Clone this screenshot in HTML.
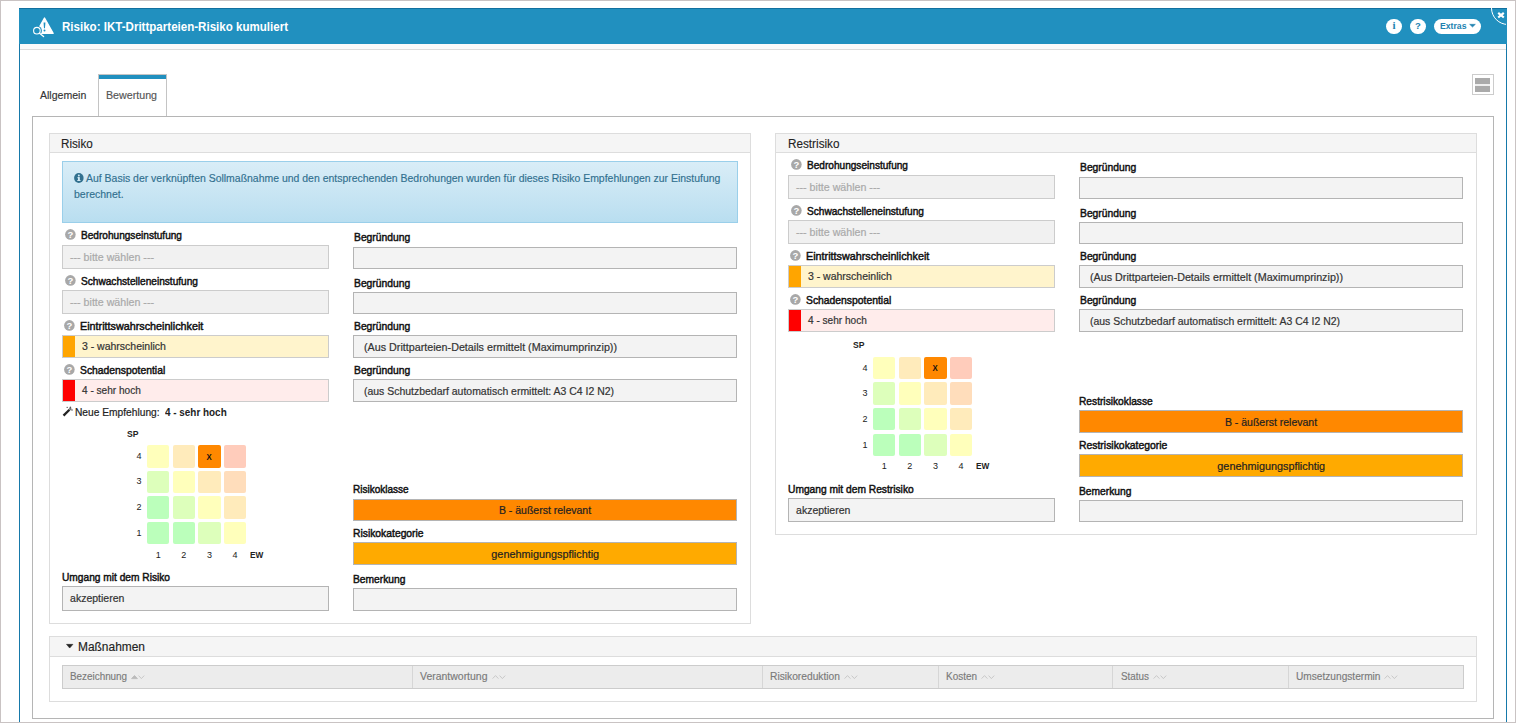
<!DOCTYPE html>
<html lang="de">
<head>
<meta charset="utf-8">
<title>Risiko: IKT-Drittparteien-Risiko kumuliert</title>
<style>
*{box-sizing:border-box;margin:0;padding:0}
html,body{width:1516px;height:723px;overflow:hidden;background:#fff}
body{position:relative;font-family:"Liberation Sans",sans-serif;font-size:11px;color:#333}
.b{position:absolute}
.t{position:absolute;white-space:nowrap;display:block}
.page-frame{border:1px solid #c9c3c3;border-bottom-width:1px}
.dlg{border:1px solid #1679aa;border-top:0;border-bottom:0;background:#fff}
.hdr{background:#2190bf;border-top:1px solid #12709f}
.subbar{background:#fafafa;border-bottom:1px solid #dcdcdc}
.tabbox{border:1px solid #b5b5b5;background:#fff}
.tab{border:1px solid #c4c4c4;border-bottom:0;background:#fff}
.tab i{position:absolute;left:0;right:0;top:0;height:4px;background:#2190bf}
.panel{border:1px solid #ddd;background:#fff}
.phead{background:#f5f5f5;border:1px solid #ddd}
.inp{border:1px solid #b4b4b4;background:#f3f3f3}
.sel{border:1px solid #ccc;background:#f1f1f1}
.alert{border:1px solid #9acfea;background:linear-gradient(#d9edf7,#b9def0)}
.cell{border-radius:2px}
.pill{background:#fff;border-radius:8px}
svg{position:absolute;overflow:visible}
.serif{font-family:"Liberation Serif",serif}

</style>
</head>
<body>
<div class="b dlg" style="left:19px;top:8px;width:1488px;height:714px;"></div>
<div class="b hdr" style="left:19px;top:8px;width:1488px;height:36px;"></div>
<div class="b subbar" style="left:20px;top:44px;width:1486px;height:6px;"></div>
<header>
<svg style="left:30px;top:14px" width="28" height="26" viewBox="0 0 28 26">
<path d="M14.5 4.1 L23.1 19.3 L6 19.3 Z" fill="#fff" stroke="#fff" stroke-width="1.4" stroke-linejoin="round"/>
<path d="M13.6 8.6 H15.4 L15 14.3 H14 Z" fill="#2190bf"/>
<circle cx="14.5" cy="16.6" r="1" fill="#2190bf"/>
<circle cx="6.9" cy="16.7" r="5" fill="#2190bf"/>
<circle cx="6.9" cy="16.7" r="3.3" fill="#2190bf" stroke="#fff" stroke-width="1.1"/>
<path d="M9.5 19.3 L13.6 22.6" stroke="#fff" stroke-width="1.3" stroke-linecap="round"/>
</svg>
<h1 class="t" style="left:61.80px;top:21.00px;font-size:12px;line-height:12px;font-weight:700;color:#fff;transform:scale(0.9629,1.0);transform-origin:0 10px;">Risiko: IKT-Drittparteien-Risiko kumuliert</h1>
<div class="b" style="left:1386px;top:19px;width:16px;height:15px;background:#fff;border-radius:8px"></div>
<span class="t serif" style="left:1392.47px;top:20.00px;font-size:11px;line-height:11px;font-weight:700;color:#2182b0;">i</span>
<div class="b" style="left:1410px;top:19px;width:16px;height:15px;background:#fff;border-radius:8px"></div>
<span class="t" style="left:1415.09px;top:21.00px;font-size:9.5px;line-height:9.5px;font-weight:700;color:#2182b0;">?</span>
<div class="b pill" style="left:1434px;top:19px;width:47px;height:15px;"></div>
<span class="t" style="left:1440.00px;top:21.00px;font-size:9.5px;line-height:9.5px;font-weight:700;color:#2182b0;transform:scale(0.9118,1.0);transform-origin:0 8px;">Extras</span>
<svg style="left:1468.5px;top:24px" width="7" height="4" viewBox="0 0 7 4"><path d="M.6 .3 H6.4 L3.5 3.1 Z" fill="#2182b0" stroke="#2182b0" stroke-width=".5" stroke-linejoin="round"/></svg>
<div class="b" style="left:1490px;top:8px;width:16px;height:18px;overflow:hidden"><div style="position:absolute;left:.6px;top:-17px;width:34px;height:34px;border:1.6px solid #fff;border-radius:50%"></div></div>
<svg style="left:1496.5px;top:11.7px" width="8" height="6.4" viewBox="0 0 8 6.4"><path d="M1.2 .9 L6.8 5.5 M6.8 .9 L1.2 5.5" stroke="#fff" stroke-width="2.2" stroke-linecap="butt"/></svg>
</header>
<nav>
<div class="b tab" style="left:98px;top:74px;width:69px;height:43px;"><i></i></div>
<div class="b tabbox" style="left:32px;top:116px;width:1462px;height:603px;"></div>
<span class="t" style="left:39.80px;top:90.00px;font-size:10.5px;line-height:10.5px;font-weight:400;-webkit-text-stroke:0.15px #333;transform:scale(1.0041,1.0);transform-origin:0 9px;">Allgemein</span>
<span class="t" style="left:106.30px;top:90.00px;font-size:10.5px;line-height:10.5px;font-weight:400;color:#555;-webkit-text-stroke:0.15px #555;transform:scale(1.0159,1.0);transform-origin:0 9px;">Bewertung</span>
<div class="b" style="left:1472px;top:74px;width:22px;height:21px;border:1px solid #ccc;background:#fff"></div>
<div class="b" style="left:1475px;top:78px;width:15px;height:14px;background:#eee"></div>
<div class="b" style="left:1475px;top:78px;width:15px;height:6px;background:#aaa"></div>
<div class="b" style="left:1475px;top:86px;width:15px;height:6px;background:#aaa"></div>
</nav>
<main>
<section>
<div class="b panel" style="left:49px;top:133px;width:702px;height:491px;"></div>
<div class="b phead" style="left:49px;top:133px;width:702px;height:20px;"></div>
<h2 class="t" style="left:61.20px;top:138.00px;font-size:12px;line-height:12px;font-weight:400;color:#222;-webkit-text-stroke:0.1px #222;transform:scale(0.9733,1.0);transform-origin:0 10px;">Risiko</h2>
<div class="b alert" style="left:62px;top:161px;width:676px;height:62px;"></div>
<svg style="left:74.4px;top:172.9px" width="9.7" height="10" viewBox="0 0 10 10" preserveAspectRatio="none"><circle cx="5" cy="5" r="4.9" fill="#31708f"/><rect x="4.1" y="4.2" width="1.9" height="3.6" fill="#d4eaf5"/><rect x="3.5" y="4.2" width="2" height="1" fill="#d4eaf5"/><rect x="3.4" y="7" width="3.3" height="1" fill="#d4eaf5"/><circle cx="5" cy="2.5" r="1" fill="#d4eaf5"/></svg>
<p class="t" style="left:86.40px;top:173.00px;font-size:10.5px;line-height:10.5px;font-weight:400;color:#31708f;-webkit-text-stroke:0.15px #31708f;transform:scale(0.9962,1.0);transform-origin:0 9px;">Auf Basis der verknüpften Sollmaßnahme und den entsprechenden Bedrohungen wurden für dieses Risiko Empfehlungen zur Einstufung</p>
<p class="t" style="left:74.00px;top:189.00px;font-size:10.5px;line-height:10.5px;font-weight:400;color:#31708f;-webkit-text-stroke:0.15px #31708f;">berechnet.</p>
<svg style="left:64.5px;top:229px" width="10.8" height="10.8" viewBox="0 0 10 10"><circle cx="5" cy="5" r="4.9" fill="#a8a8a8"/><text x="5" y="8.1" font-size="8.8" font-weight="700" text-anchor="middle" fill="#fff" font-family="Liberation Sans, sans-serif">?</text></svg>
<label class="t" style="left:80.50px;top:230.00px;font-size:10.5px;line-height:10.5px;font-weight:400;color:#111;-webkit-text-stroke:0.45px #111;transform:scale(0.9610,1.0);transform-origin:0 9px;">Bedrohungseinstufung</label>
<div class="b sel" style="left:62px;top:245px;width:267px;height:24px;"></div>
<span class="t" style="left:69.80px;top:252.00px;font-size:10.5px;line-height:10.5px;font-weight:400;color:#aaa;-webkit-text-stroke:0.2px #aaa;transform:scale(1.0138,1.0);transform-origin:0 9px;">--- bitte wählen ---</span>
<label class="t" style="left:353.50px;top:232.00px;font-size:10.5px;line-height:10.5px;font-weight:400;color:#111;-webkit-text-stroke:0.45px #111;transform:scale(0.9822,1.0);transform-origin:0 9px;">Begründung</label>
<div class="b inp" style="left:353px;top:247px;width:384px;height:22px;"></div>
<svg style="left:64.5px;top:275px" width="10.8" height="10.8" viewBox="0 0 10 10"><circle cx="5" cy="5" r="4.9" fill="#a8a8a8"/><text x="5" y="8.1" font-size="8.8" font-weight="700" text-anchor="middle" fill="#fff" font-family="Liberation Sans, sans-serif">?</text></svg>
<label class="t" style="left:80.50px;top:276.00px;font-size:10.5px;line-height:10.5px;font-weight:400;color:#111;-webkit-text-stroke:0.45px #111;transform:scale(0.9636,1.0);transform-origin:0 9px;">Schwachstelleneinstufung</label>
<div class="b sel" style="left:62px;top:290px;width:267px;height:24px;"></div>
<span class="t" style="left:69.80px;top:297.00px;font-size:10.5px;line-height:10.5px;font-weight:400;color:#aaa;-webkit-text-stroke:0.2px #aaa;transform:scale(1.0138,1.0);transform-origin:0 9px;">--- bitte wählen ---</span>
<label class="t" style="left:353.50px;top:278.00px;font-size:10.5px;line-height:10.5px;font-weight:400;color:#111;-webkit-text-stroke:0.45px #111;transform:scale(0.9822,1.0);transform-origin:0 9px;">Begründung</label>
<div class="b inp" style="left:353px;top:292px;width:384px;height:22px;"></div>
<svg style="left:64.2px;top:320px" width="10.8" height="10.8" viewBox="0 0 10 10"><circle cx="5" cy="5" r="4.9" fill="#a8a8a8"/><text x="5" y="8.1" font-size="8.8" font-weight="700" text-anchor="middle" fill="#fff" font-family="Liberation Sans, sans-serif">?</text></svg>
<label class="t" style="left:80.20px;top:321.00px;font-size:10.5px;line-height:10.5px;font-weight:400;color:#111;-webkit-text-stroke:0.45px #111;transform:scale(1.0256,1.0);transform-origin:0 9px;">Eintrittswahrscheinlichkeit</label>
<div class="b sel" style="left:62px;top:335px;width:267px;height:23px;background:#fff4cc;"></div>
<div class="b" style="left:63px;top:336px;width:12px;height:21px;background:#ffa500"></div>
<span class="t" style="left:81.90px;top:341.00px;font-size:10.5px;line-height:10.5px;font-weight:400;-webkit-text-stroke:0.2px #333;">3 - wahrscheinlich</span>
<label class="t" style="left:353.50px;top:321.00px;font-size:10.5px;line-height:10.5px;font-weight:400;color:#111;-webkit-text-stroke:0.45px #111;transform:scale(0.9822,1.0);transform-origin:0 9px;">Begründung</label>
<div class="b inp" style="left:353px;top:335px;width:384px;height:23px;"></div>
<span class="t" style="left:363.80px;top:342.00px;font-size:10.5px;line-height:10.5px;font-weight:400;-webkit-text-stroke:0.2px #333;transform:scale(1.0227,1.0);transform-origin:0 9px;">(Aus Drittparteien-Details ermittelt (Maximumprinzip))</span>
<svg style="left:64.2px;top:364px" width="10.8" height="10.8" viewBox="0 0 10 10"><circle cx="5" cy="5" r="4.9" fill="#a8a8a8"/><text x="5" y="8.1" font-size="8.8" font-weight="700" text-anchor="middle" fill="#fff" font-family="Liberation Sans, sans-serif">?</text></svg>
<label class="t" style="left:80.20px;top:365.00px;font-size:10.5px;line-height:10.5px;font-weight:400;color:#111;-webkit-text-stroke:0.45px #111;transform:scale(0.9860,1.0);transform-origin:0 9px;">Schadenspotential</label>
<div class="b sel" style="left:62px;top:379px;width:267px;height:23px;background:#ffeceb;"></div>
<div class="b" style="left:63px;top:380px;width:12px;height:21px;background:#ff0000"></div>
<span class="t" style="left:81.90px;top:385.00px;font-size:10.5px;line-height:10.5px;font-weight:400;-webkit-text-stroke:0.2px #333;transform:scale(0.9593,1.0);transform-origin:0 9px;">4 - sehr hoch</span>
<label class="t" style="left:353.50px;top:365.00px;font-size:10.5px;line-height:10.5px;font-weight:400;color:#111;-webkit-text-stroke:0.45px #111;transform:scale(0.9822,1.0);transform-origin:0 9px;">Begründung</label>
<div class="b inp" style="left:353px;top:379px;width:384px;height:23px;"></div>
<span class="t" style="left:363.80px;top:386.00px;font-size:10.5px;line-height:10.5px;font-weight:400;-webkit-text-stroke:0.2px #333;transform:scale(0.9962,1.0);transform-origin:0 9px;">(aus Schutzbedarf automatisch ermittelt: A3 C4 I2 N2)</span>
<svg style="left:61.5px;top:406.2px" width="11" height="11" viewBox="0 0 11 11"><path d="M1.5 9.6 L7.4 3.7" stroke="#222" stroke-width="2.3" stroke-linecap="butt"/><path d="M7.4 3.7 L9 2.1" stroke="#777" stroke-width="2.3"/><path d="M8.4 .6 L8.4 2.2 M7.6 1.4 L9.2 1.4 M10 3.4 L10 4.6 M9.4 4 L10.6 4 M5.2 .9 L5.2 1.9 M4.7 1.4 L5.7 1.4" stroke="#444" stroke-width=".7"/></svg>
<span class="t" style="left:74.80px;top:407.00px;font-size:10.5px;line-height:10.5px;font-weight:400;color:#222;-webkit-text-stroke:0.2px #222;transform:scale(0.9726,1.0);transform-origin:0 9px;">Neue Empfehlung:</span>
<span class="t" style="left:164.70px;top:407.00px;font-size:10.5px;line-height:10.5px;font-weight:700;color:#222;transform:scale(0.9440,1.0);transform-origin:0 9px;">4 - sehr hoch</span>
<div class="b" style="left:147px;top:445px;width:22px;height:23px;background:#ffffbb;border-radius:2px"></div>
<div class="b" style="left:173px;top:445px;width:22px;height:23px;background:#ffebbb;border-radius:2px"></div>
<div class="b" style="left:198px;top:445px;width:23px;height:23px;background:#ff8800;border-radius:2px"></div>
<div class="b" style="left:224px;top:445px;width:22px;height:23px;background:#ffccbb;border-radius:2px"></div>
<div class="b" style="left:147px;top:471px;width:22px;height:22px;background:#ddffbb;border-radius:2px"></div>
<div class="b" style="left:173px;top:471px;width:22px;height:22px;background:#ffffbb;border-radius:2px"></div>
<div class="b" style="left:198px;top:471px;width:23px;height:22px;background:#ffebbb;border-radius:2px"></div>
<div class="b" style="left:224px;top:471px;width:22px;height:22px;background:#ffddbb;border-radius:2px"></div>
<div class="b" style="left:147px;top:496px;width:22px;height:23px;background:#bbffbb;border-radius:2px"></div>
<div class="b" style="left:173px;top:496px;width:22px;height:23px;background:#ddffbb;border-radius:2px"></div>
<div class="b" style="left:198px;top:496px;width:23px;height:23px;background:#ffffbb;border-radius:2px"></div>
<div class="b" style="left:224px;top:496px;width:22px;height:23px;background:#ffebbb;border-radius:2px"></div>
<div class="b" style="left:147px;top:522px;width:22px;height:22px;background:#bbffbb;border-radius:2px"></div>
<div class="b" style="left:173px;top:522px;width:22px;height:22px;background:#bbffbb;border-radius:2px"></div>
<div class="b" style="left:198px;top:522px;width:23px;height:22px;background:#ddffbb;border-radius:2px"></div>
<div class="b" style="left:224px;top:522px;width:22px;height:22px;background:#ffffbb;border-radius:2px"></div>
<span class="t" style="left:126.80px;top:429.00px;font-size:9.5px;line-height:9.5px;font-weight:700;color:#222;transform:scale(0.9064,1.0);transform-origin:0 8px;">SP</span>
<span class="t" style="left:136.49px;top:452.00px;font-size:9px;line-height:9px;font-weight:400;color:#222;">4</span>
<span class="t" style="left:136.49px;top:477.00px;font-size:9px;line-height:9px;font-weight:400;color:#222;">3</span>
<span class="t" style="left:136.49px;top:503.00px;font-size:9px;line-height:9px;font-weight:400;color:#222;">2</span>
<span class="t" style="left:136.49px;top:529.00px;font-size:9px;line-height:9px;font-weight:400;color:#222;">1</span>
<span class="t" style="left:155.79px;top:551.00px;font-size:9px;line-height:9px;font-weight:400;color:#222;">1</span>
<span class="t" style="left:181.34px;top:551.00px;font-size:9px;line-height:9px;font-weight:400;color:#222;">2</span>
<span class="t" style="left:206.89px;top:551.00px;font-size:9px;line-height:9px;font-weight:400;color:#222;">3</span>
<span class="t" style="left:232.44px;top:551.00px;font-size:9px;line-height:9px;font-weight:400;color:#222;">4</span>
<span class="t" style="left:249.70px;top:550.00px;font-size:9.5px;line-height:9.5px;font-weight:700;color:#222;transform:scale(0.8686,1.0);transform-origin:0 8px;">EW</span>
<span class="t" style="left:206.43px;top:452.00px;font-size:9.5px;line-height:9.5px;font-weight:700;color:#111;transform:scale(0.8197,1.0);transform-origin:50% 8px;">X</span>
<label class="t" style="left:61.60px;top:572.00px;font-size:10.5px;line-height:10.5px;font-weight:400;color:#111;-webkit-text-stroke:0.45px #111;transform:scale(0.9690,1.0);transform-origin:0 9px;">Umgang mit dem Risiko</label>
<div class="b inp" style="left:62px;top:586px;width:267px;height:25px;"></div>
<span class="t" style="left:70.10px;top:593.00px;font-size:10.5px;line-height:10.5px;font-weight:400;-webkit-text-stroke:0.2px #333;">akzeptieren</span>
<label class="t" style="left:353.00px;top:484.00px;font-size:10.5px;line-height:10.5px;font-weight:400;color:#111;-webkit-text-stroke:0.45px #111;transform:scale(0.9527,1.0);transform-origin:0 9px;">Risikoklasse</label>
<div class="b inp" style="left:353px;top:499px;width:384px;height:22px;background:#ff8800;"></div>
<span class="t" style="left:498.90px;top:505.00px;font-size:10.5px;line-height:10.5px;font-weight:400;color:#222;-webkit-text-stroke:0.2px #222;">B - äußerst relevant</span>
<label class="t" style="left:353.00px;top:528.00px;font-size:10.5px;line-height:10.5px;font-weight:400;color:#111;-webkit-text-stroke:0.45px #111;transform:scale(0.9833,1.0);transform-origin:0 9px;">Risikokategorie</label>
<div class="b inp" style="left:353px;top:542px;width:384px;height:23px;background:#ffaa00;"></div>
<span class="t" style="left:492.75px;top:549.00px;font-size:10.5px;line-height:10.5px;font-weight:400;color:#222;-webkit-text-stroke:0.2px #222;transform:scale(1.0316,1.0);transform-origin:50% 9px;">genehmigungspflichtig</span>
<label class="t" style="left:353.00px;top:574.00px;font-size:10.5px;line-height:10.5px;font-weight:400;color:#111;-webkit-text-stroke:0.45px #111;transform:scale(0.9776,1.0);transform-origin:0 9px;">Bemerkung</label>
<div class="b inp" style="left:353px;top:588px;width:384px;height:23px;"></div>
</section>
<section>
<div class="b panel" style="left:775px;top:133px;width:702px;height:402px;"></div>
<div class="b phead" style="left:775px;top:133px;width:702px;height:20px;"></div>
<h2 class="t" style="left:787.50px;top:138.00px;font-size:12px;line-height:12px;font-weight:400;color:#222;-webkit-text-stroke:0.1px #222;transform:scale(0.9775,1.0);transform-origin:0 10px;">Restrisiko</h2>
<svg style="left:790.5px;top:159px" width="10.8" height="10.8" viewBox="0 0 10 10"><circle cx="5" cy="5" r="4.9" fill="#a8a8a8"/><text x="5" y="8.1" font-size="8.8" font-weight="700" text-anchor="middle" fill="#fff" font-family="Liberation Sans, sans-serif">?</text></svg>
<label class="t" style="left:806.50px;top:160.00px;font-size:10.5px;line-height:10.5px;font-weight:400;color:#111;-webkit-text-stroke:0.45px #111;transform:scale(0.9610,1.0);transform-origin:0 9px;">Bedrohungseinstufung</label>
<div class="b sel" style="left:788px;top:175px;width:267px;height:24px;"></div>
<span class="t" style="left:795.80px;top:182.00px;font-size:10.5px;line-height:10.5px;font-weight:400;color:#aaa;-webkit-text-stroke:0.2px #aaa;transform:scale(1.0138,1.0);transform-origin:0 9px;">--- bitte wählen ---</span>
<label class="t" style="left:1079.50px;top:162.00px;font-size:10.5px;line-height:10.5px;font-weight:400;color:#111;-webkit-text-stroke:0.45px #111;transform:scale(0.9822,1.0);transform-origin:0 9px;">Begründung</label>
<div class="b inp" style="left:1079px;top:177px;width:384px;height:22px;"></div>
<svg style="left:790.5px;top:205px" width="10.8" height="10.8" viewBox="0 0 10 10"><circle cx="5" cy="5" r="4.9" fill="#a8a8a8"/><text x="5" y="8.1" font-size="8.8" font-weight="700" text-anchor="middle" fill="#fff" font-family="Liberation Sans, sans-serif">?</text></svg>
<label class="t" style="left:806.50px;top:206.00px;font-size:10.5px;line-height:10.5px;font-weight:400;color:#111;-webkit-text-stroke:0.45px #111;transform:scale(0.9636,1.0);transform-origin:0 9px;">Schwachstelleneinstufung</label>
<div class="b sel" style="left:788px;top:220px;width:267px;height:24px;"></div>
<span class="t" style="left:795.80px;top:227.00px;font-size:10.5px;line-height:10.5px;font-weight:400;color:#aaa;-webkit-text-stroke:0.2px #aaa;transform:scale(1.0138,1.0);transform-origin:0 9px;">--- bitte wählen ---</span>
<label class="t" style="left:1079.50px;top:208.00px;font-size:10.5px;line-height:10.5px;font-weight:400;color:#111;-webkit-text-stroke:0.45px #111;transform:scale(0.9822,1.0);transform-origin:0 9px;">Begründung</label>
<div class="b inp" style="left:1079px;top:222px;width:384px;height:22px;"></div>
<svg style="left:790.2px;top:250px" width="10.8" height="10.8" viewBox="0 0 10 10"><circle cx="5" cy="5" r="4.9" fill="#a8a8a8"/><text x="5" y="8.1" font-size="8.8" font-weight="700" text-anchor="middle" fill="#fff" font-family="Liberation Sans, sans-serif">?</text></svg>
<label class="t" style="left:806.20px;top:251.00px;font-size:10.5px;line-height:10.5px;font-weight:400;color:#111;-webkit-text-stroke:0.45px #111;transform:scale(1.0256,1.0);transform-origin:0 9px;">Eintrittswahrscheinlichkeit</label>
<div class="b sel" style="left:788px;top:265px;width:267px;height:23px;background:#fff4cc;"></div>
<div class="b" style="left:789px;top:266px;width:12px;height:21px;background:#ffa500"></div>
<span class="t" style="left:807.90px;top:271.00px;font-size:10.5px;line-height:10.5px;font-weight:400;-webkit-text-stroke:0.2px #333;">3 - wahrscheinlich</span>
<label class="t" style="left:1079.50px;top:251.00px;font-size:10.5px;line-height:10.5px;font-weight:400;color:#111;-webkit-text-stroke:0.45px #111;transform:scale(0.9822,1.0);transform-origin:0 9px;">Begründung</label>
<div class="b inp" style="left:1079px;top:265px;width:384px;height:23px;"></div>
<span class="t" style="left:1089.80px;top:272.00px;font-size:10.5px;line-height:10.5px;font-weight:400;-webkit-text-stroke:0.2px #333;transform:scale(1.0227,1.0);transform-origin:0 9px;">(Aus Drittparteien-Details ermittelt (Maximumprinzip))</span>
<svg style="left:790.2px;top:294px" width="10.8" height="10.8" viewBox="0 0 10 10"><circle cx="5" cy="5" r="4.9" fill="#a8a8a8"/><text x="5" y="8.1" font-size="8.8" font-weight="700" text-anchor="middle" fill="#fff" font-family="Liberation Sans, sans-serif">?</text></svg>
<label class="t" style="left:806.20px;top:295.00px;font-size:10.5px;line-height:10.5px;font-weight:400;color:#111;-webkit-text-stroke:0.45px #111;transform:scale(0.9860,1.0);transform-origin:0 9px;">Schadenspotential</label>
<div class="b sel" style="left:788px;top:309px;width:267px;height:23px;background:#ffeceb;"></div>
<div class="b" style="left:789px;top:310px;width:12px;height:21px;background:#ff0000"></div>
<span class="t" style="left:807.90px;top:315.00px;font-size:10.5px;line-height:10.5px;font-weight:400;-webkit-text-stroke:0.2px #333;transform:scale(0.9593,1.0);transform-origin:0 9px;">4 - sehr hoch</span>
<label class="t" style="left:1079.50px;top:295.00px;font-size:10.5px;line-height:10.5px;font-weight:400;color:#111;-webkit-text-stroke:0.45px #111;transform:scale(0.9822,1.0);transform-origin:0 9px;">Begründung</label>
<div class="b inp" style="left:1079px;top:309px;width:384px;height:23px;"></div>
<span class="t" style="left:1089.80px;top:316.00px;font-size:10.5px;line-height:10.5px;font-weight:400;-webkit-text-stroke:0.2px #333;transform:scale(0.9962,1.0);transform-origin:0 9px;">(aus Schutzbedarf automatisch ermittelt: A3 C4 I2 N2)</span>
<div class="b" style="left:873px;top:357px;width:22px;height:22px;background:#ffffbb;border-radius:2px"></div>
<div class="b" style="left:899px;top:357px;width:22px;height:22px;background:#ffebbb;border-radius:2px"></div>
<div class="b" style="left:924px;top:357px;width:23px;height:22px;background:#ff8800;border-radius:2px"></div>
<div class="b" style="left:950px;top:357px;width:22px;height:22px;background:#ffccbb;border-radius:2px"></div>
<div class="b" style="left:873px;top:382px;width:22px;height:23px;background:#ddffbb;border-radius:2px"></div>
<div class="b" style="left:899px;top:382px;width:22px;height:23px;background:#ffffbb;border-radius:2px"></div>
<div class="b" style="left:924px;top:382px;width:23px;height:23px;background:#ffebbb;border-radius:2px"></div>
<div class="b" style="left:950px;top:382px;width:22px;height:23px;background:#ffddbb;border-radius:2px"></div>
<div class="b" style="left:873px;top:408px;width:22px;height:22px;background:#bbffbb;border-radius:2px"></div>
<div class="b" style="left:899px;top:408px;width:22px;height:22px;background:#ddffbb;border-radius:2px"></div>
<div class="b" style="left:924px;top:408px;width:23px;height:22px;background:#ffffbb;border-radius:2px"></div>
<div class="b" style="left:950px;top:408px;width:22px;height:22px;background:#ffebbb;border-radius:2px"></div>
<div class="b" style="left:873px;top:434px;width:22px;height:22px;background:#bbffbb;border-radius:2px"></div>
<div class="b" style="left:899px;top:434px;width:22px;height:22px;background:#bbffbb;border-radius:2px"></div>
<div class="b" style="left:924px;top:434px;width:23px;height:22px;background:#ddffbb;border-radius:2px"></div>
<div class="b" style="left:950px;top:434px;width:22px;height:22px;background:#ffffbb;border-radius:2px"></div>
<span class="t" style="left:852.80px;top:340.00px;font-size:9.5px;line-height:9.5px;font-weight:700;color:#222;transform:scale(0.9064,1.0);transform-origin:0 8px;">SP</span>
<span class="t" style="left:862.49px;top:364.00px;font-size:9px;line-height:9px;font-weight:400;color:#222;">4</span>
<span class="t" style="left:862.49px;top:389.00px;font-size:9px;line-height:9px;font-weight:400;color:#222;">3</span>
<span class="t" style="left:862.49px;top:415.00px;font-size:9px;line-height:9px;font-weight:400;color:#222;">2</span>
<span class="t" style="left:862.49px;top:441.00px;font-size:9px;line-height:9px;font-weight:400;color:#222;">1</span>
<span class="t" style="left:881.79px;top:462.00px;font-size:9px;line-height:9px;font-weight:400;color:#222;">1</span>
<span class="t" style="left:907.34px;top:462.00px;font-size:9px;line-height:9px;font-weight:400;color:#222;">2</span>
<span class="t" style="left:932.89px;top:462.00px;font-size:9px;line-height:9px;font-weight:400;color:#222;">3</span>
<span class="t" style="left:958.44px;top:462.00px;font-size:9px;line-height:9px;font-weight:400;color:#222;">4</span>
<span class="t" style="left:975.70px;top:461.00px;font-size:9.5px;line-height:9.5px;font-weight:700;color:#222;transform:scale(0.8686,1.0);transform-origin:0 8px;">EW</span>
<span class="t" style="left:932.43px;top:363.00px;font-size:9.5px;line-height:9.5px;font-weight:700;color:#111;transform:scale(0.8197,1.0);transform-origin:50% 8px;">X</span>
<label class="t" style="left:787.60px;top:484.00px;font-size:10.5px;line-height:10.5px;font-weight:400;color:#111;-webkit-text-stroke:0.45px #111;transform:scale(0.9748,1.0);transform-origin:0 9px;">Umgang mit dem Restrisiko</label>
<div class="b inp" style="left:788px;top:498px;width:267px;height:24px;"></div>
<span class="t" style="left:796.10px;top:505.00px;font-size:10.5px;line-height:10.5px;font-weight:400;-webkit-text-stroke:0.2px #333;">akzeptieren</span>
<label class="t" style="left:1079.00px;top:396.00px;font-size:10.5px;line-height:10.5px;font-weight:400;color:#111;-webkit-text-stroke:0.45px #111;transform:scale(0.9715,1.0);transform-origin:0 9px;">Restrisikoklasse</label>
<div class="b inp" style="left:1079px;top:410px;width:384px;height:23px;background:#ff8800;"></div>
<span class="t" style="left:1224.90px;top:417.00px;font-size:10.5px;line-height:10.5px;font-weight:400;color:#222;-webkit-text-stroke:0.2px #222;">B - äußerst relevant</span>
<label class="t" style="left:1079.00px;top:440.00px;font-size:10.5px;line-height:10.5px;font-weight:400;color:#111;-webkit-text-stroke:0.45px #111;transform:scale(0.9900,1.0);transform-origin:0 9px;">Restrisikokategorie</label>
<div class="b inp" style="left:1079px;top:454px;width:384px;height:23px;background:#ffaa00;"></div>
<span class="t" style="left:1218.75px;top:461.00px;font-size:10.5px;line-height:10.5px;font-weight:400;color:#222;-webkit-text-stroke:0.2px #222;transform:scale(1.0316,1.0);transform-origin:50% 9px;">genehmigungspflichtig</span>
<label class="t" style="left:1079.00px;top:486.00px;font-size:10.5px;line-height:10.5px;font-weight:400;color:#111;-webkit-text-stroke:0.45px #111;transform:scale(0.9776,1.0);transform-origin:0 9px;">Bemerkung</label>
<div class="b inp" style="left:1079px;top:500px;width:384px;height:22px;"></div>
</section>
<section>
<div class="b panel" style="left:49px;top:636px;width:1428px;height:66px;"></div>
<div class="b phead" style="left:49px;top:636px;width:1428px;height:21px;"></div>
<svg style="left:66.2px;top:644.1px" width="7.4" height="4.6" viewBox="0 0 8 5"><path d="M.5 .4 H7.5 L4 4.4 Z" fill="#222" stroke="#222" stroke-width=".6" stroke-linejoin="round"/></svg>
<h2 class="t" style="left:77.80px;top:641.00px;font-size:12px;line-height:12px;font-weight:400;color:#222;-webkit-text-stroke:0.15px #222;transform:scale(0.9944,1.0);transform-origin:0 10px;">Maßnahmen</h2>
<div class="b" style="left:62px;top:665px;width:1402px;height:24px;background:#ececec;border:1px solid #ccc"></div>
<span class="t" style="left:70.30px;top:671.00px;font-size:10.5px;line-height:10.5px;font-weight:400;color:#7a7a7a;-webkit-text-stroke:0.15px #7a7a7a;transform:scale(0.9404,1.0);transform-origin:0 9px;">Bezeichnung</span>
<svg style="left:131.10000000000002px;top:673.5px" width="15" height="7" viewBox="0 0 15 7"><path d="M.6 4.6 L3.5 1.5 L6.4 4.6 Z" fill="#bbb" stroke="#bbb" stroke-width=".9" stroke-linejoin="round"/><path d="M7.6 1.6 L10.4 4.6 L13.2 1.6" fill="none" stroke="#c8c8c8" stroke-width="1"/></svg>
<div class="b" style="left:412px;top:666px;width:1px;height:22px;background:#d6d6d6"></div>
<span class="t" style="left:420.30px;top:671.00px;font-size:10.5px;line-height:10.5px;font-weight:400;color:#7a7a7a;-webkit-text-stroke:0.15px #7a7a7a;transform:scale(0.9968,1.0);transform-origin:0 9px;">Verantwortung</span>
<svg style="left:491.5px;top:673.5px" width="15" height="7" viewBox="0 0 15 7"><path d="M.6 4.6 L3.5 1.6 L6.4 4.6" fill="none" stroke="#c8c8c8" stroke-width="1"/><path d="M7.6 1.6 L10.4 4.6 L13.2 1.6" fill="none" stroke="#c8c8c8" stroke-width="1"/></svg>
<div class="b" style="left:762px;top:666px;width:1px;height:22px;background:#d6d6d6"></div>
<span class="t" style="left:770.30px;top:671.00px;font-size:10.5px;line-height:10.5px;font-weight:400;color:#7a7a7a;-webkit-text-stroke:0.15px #7a7a7a;transform:scale(0.9750,1.0);transform-origin:0 9px;">Risikoreduktion</span>
<svg style="left:844.0px;top:673.5px" width="15" height="7" viewBox="0 0 15 7"><path d="M.6 4.6 L3.5 1.6 L6.4 4.6" fill="none" stroke="#c8c8c8" stroke-width="1"/><path d="M7.6 1.6 L10.4 4.6 L13.2 1.6" fill="none" stroke="#c8c8c8" stroke-width="1"/></svg>
<div class="b" style="left:938px;top:666px;width:1px;height:22px;background:#d6d6d6"></div>
<span class="t" style="left:945.80px;top:671.00px;font-size:10.5px;line-height:10.5px;font-weight:400;color:#7a7a7a;-webkit-text-stroke:0.15px #7a7a7a;transform:scale(0.9479,1.0);transform-origin:0 9px;">Kosten</span>
<svg style="left:980.5px;top:673.5px" width="15" height="7" viewBox="0 0 15 7"><path d="M.6 4.6 L3.5 1.6 L6.4 4.6" fill="none" stroke="#c8c8c8" stroke-width="1"/><path d="M7.6 1.6 L10.4 4.6 L13.2 1.6" fill="none" stroke="#c8c8c8" stroke-width="1"/></svg>
<div class="b" style="left:1112px;top:666px;width:1px;height:22px;background:#d6d6d6"></div>
<span class="t" style="left:1120.80px;top:671.00px;font-size:10.5px;line-height:10.5px;font-weight:400;color:#7a7a7a;-webkit-text-stroke:0.15px #7a7a7a;transform:scale(0.9402,1.0);transform-origin:0 9px;">Status</span>
<svg style="left:1152.5px;top:673.5px" width="15" height="7" viewBox="0 0 15 7"><path d="M.6 4.6 L3.5 1.6 L6.4 4.6" fill="none" stroke="#c8c8c8" stroke-width="1"/><path d="M7.6 1.6 L10.4 4.6 L13.2 1.6" fill="none" stroke="#c8c8c8" stroke-width="1"/></svg>
<div class="b" style="left:1288px;top:666px;width:1px;height:22px;background:#d6d6d6"></div>
<span class="t" style="left:1295.80px;top:671.00px;font-size:10.5px;line-height:10.5px;font-weight:400;color:#7a7a7a;-webkit-text-stroke:0.15px #7a7a7a;transform:scale(0.9654,1.0);transform-origin:0 9px;">Umsetzungstermin</span>
<svg style="left:1384.0px;top:673.5px" width="15" height="7" viewBox="0 0 15 7"><path d="M.6 4.6 L3.5 1.6 L6.4 4.6" fill="none" stroke="#c8c8c8" stroke-width="1"/><path d="M7.6 1.6 L10.4 4.6 L13.2 1.6" fill="none" stroke="#c8c8c8" stroke-width="1"/></svg>
</section>
</main>
<div class="b page-frame" style="left:0px;top:0px;width:1516px;height:723px;"></div>
</body>
</html>
